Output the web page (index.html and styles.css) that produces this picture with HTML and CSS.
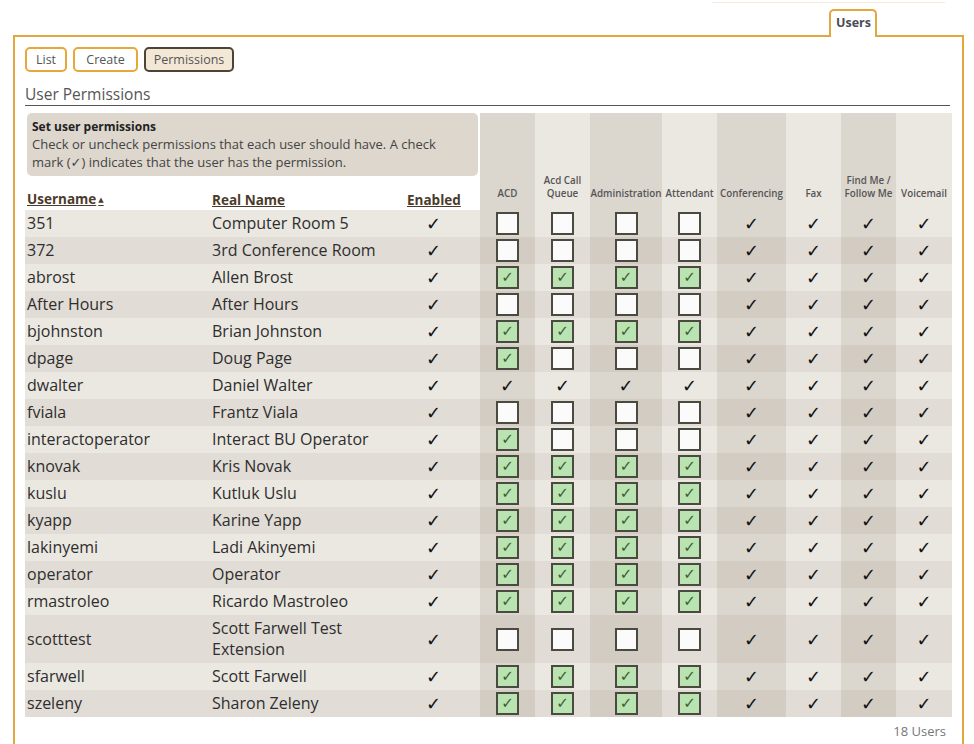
FILE: index.html
```html
<!DOCTYPE html>
<html>
<head>
<meta charset="utf-8">
<link rel="stylesheet" href="styles.css">
</head>
<body>
<div class="topline"></div>
<div class="tabbar"><div class="tab">Users</div></div>
<div class="panel">
  <div class="buttons">
    <span class="btn btn-list">List</span>
    <span class="btn btn-create">Create</span>
    <span class="btn btn-perm active">Permissions</span>
  </div>
  <h2 class="heading">User Permissions</h2>
  <table class="perms">
    <colgroup>
      <col class="c-user"><col class="c-real"><col class="c-en">
      <col class="bd w55"><col class="bl w55"><col class="bd w72"><col class="bl w55">
      <col class="bd w69"><col class="bl w55"><col class="bd w55"><col class="bl w56">
    </colgroup>
    <thead>
      <tr>
        <td colspan="3" class="infocell">
          <div class="info">
            <div class="info-title">Set user permissions</div>
            <div class="info-text">Check or uncheck permissions that each user should have. A check mark (✓) indicates that the user has the permission.</div>
          </div>
        </td>
        <th rowspan="2" class="ph">ACD</th>
        <th rowspan="2" class="ph">Acd Call<br>Queue</th>
        <th rowspan="2" class="ph">Administration</th>
        <th rowspan="2" class="ph">Attendant</th>
        <th rowspan="2" class="ph">Conferencing</th>
        <th rowspan="2" class="ph">Fax</th>
        <th rowspan="2" class="ph">Find Me /<br>Follow Me</th>
        <th rowspan="2" class="ph">Voicemail</th>
      </tr>
      <tr>
        <th class="lh"><span class="sort">Username<span class="arrow">▲</span></span></th>
        <th class="lh"><span class="sort">Real Name</span></th>
        <th class="lh"><span class="sort">Enabled</span></th>
      </tr>
    </thead>
    <tbody>
      <tr><td class="user">351</td><td class="real">Computer Room 5</td><td class="en">✓</td>
        <td class="p"><span class="cb"></span></td><td class="p"><span class="cb"></span></td><td class="p"><span class="cb"></span></td><td class="p"><span class="cb"></span></td>
        <td class="p ck">✓</td><td class="p ck">✓</td><td class="p ck">✓</td><td class="p ck">✓</td></tr>
      <tr><td class="user">372</td><td class="real">3rd Conference Room</td><td class="en">✓</td>
        <td class="p"><span class="cb"></span></td><td class="p"><span class="cb"></span></td><td class="p"><span class="cb"></span></td><td class="p"><span class="cb"></span></td>
        <td class="p ck">✓</td><td class="p ck">✓</td><td class="p ck">✓</td><td class="p ck">✓</td></tr>
      <tr><td class="user">abrost</td><td class="real">Allen Brost</td><td class="en">✓</td>
        <td class="p"><span class="cb on">✓</span></td><td class="p"><span class="cb on">✓</span></td><td class="p"><span class="cb on">✓</span></td><td class="p"><span class="cb on">✓</span></td>
        <td class="p ck">✓</td><td class="p ck">✓</td><td class="p ck">✓</td><td class="p ck">✓</td></tr>
      <tr><td class="user">After Hours</td><td class="real">After Hours</td><td class="en">✓</td>
        <td class="p"><span class="cb"></span></td><td class="p"><span class="cb"></span></td><td class="p"><span class="cb"></span></td><td class="p"><span class="cb"></span></td>
        <td class="p ck">✓</td><td class="p ck">✓</td><td class="p ck">✓</td><td class="p ck">✓</td></tr>
      <tr><td class="user">bjohnston</td><td class="real">Brian Johnston</td><td class="en">✓</td>
        <td class="p"><span class="cb on">✓</span></td><td class="p"><span class="cb on">✓</span></td><td class="p"><span class="cb on">✓</span></td><td class="p"><span class="cb on">✓</span></td>
        <td class="p ck">✓</td><td class="p ck">✓</td><td class="p ck">✓</td><td class="p ck">✓</td></tr>
      <tr><td class="user">dpage</td><td class="real">Doug Page</td><td class="en">✓</td>
        <td class="p"><span class="cb on">✓</span></td><td class="p"><span class="cb"></span></td><td class="p"><span class="cb"></span></td><td class="p"><span class="cb"></span></td>
        <td class="p ck">✓</td><td class="p ck">✓</td><td class="p ck">✓</td><td class="p ck">✓</td></tr>
      <tr><td class="user">dwalter</td><td class="real">Daniel Walter</td><td class="en">✓</td>
        <td class="p ck">✓</td><td class="p ck">✓</td><td class="p ck">✓</td><td class="p ck">✓</td>
        <td class="p ck">✓</td><td class="p ck">✓</td><td class="p ck">✓</td><td class="p ck">✓</td></tr>
      <tr><td class="user">fviala</td><td class="real">Frantz Viala</td><td class="en">✓</td>
        <td class="p"><span class="cb"></span></td><td class="p"><span class="cb"></span></td><td class="p"><span class="cb"></span></td><td class="p"><span class="cb"></span></td>
        <td class="p ck">✓</td><td class="p ck">✓</td><td class="p ck">✓</td><td class="p ck">✓</td></tr>
      <tr><td class="user">interactoperator</td><td class="real">Interact BU Operator</td><td class="en">✓</td>
        <td class="p"><span class="cb on">✓</span></td><td class="p"><span class="cb"></span></td><td class="p"><span class="cb"></span></td><td class="p"><span class="cb"></span></td>
        <td class="p ck">✓</td><td class="p ck">✓</td><td class="p ck">✓</td><td class="p ck">✓</td></tr>
      <tr><td class="user">knovak</td><td class="real">Kris Novak</td><td class="en">✓</td>
        <td class="p"><span class="cb on">✓</span></td><td class="p"><span class="cb on">✓</span></td><td class="p"><span class="cb on">✓</span></td><td class="p"><span class="cb on">✓</span></td>
        <td class="p ck">✓</td><td class="p ck">✓</td><td class="p ck">✓</td><td class="p ck">✓</td></tr>
      <tr><td class="user">kuslu</td><td class="real">Kutluk Uslu</td><td class="en">✓</td>
        <td class="p"><span class="cb on">✓</span></td><td class="p"><span class="cb on">✓</span></td><td class="p"><span class="cb on">✓</span></td><td class="p"><span class="cb on">✓</span></td>
        <td class="p ck">✓</td><td class="p ck">✓</td><td class="p ck">✓</td><td class="p ck">✓</td></tr>
      <tr><td class="user">kyapp</td><td class="real">Karine Yapp</td><td class="en">✓</td>
        <td class="p"><span class="cb on">✓</span></td><td class="p"><span class="cb on">✓</span></td><td class="p"><span class="cb on">✓</span></td><td class="p"><span class="cb on">✓</span></td>
        <td class="p ck">✓</td><td class="p ck">✓</td><td class="p ck">✓</td><td class="p ck">✓</td></tr>
      <tr><td class="user">lakinyemi</td><td class="real">Ladi Akinyemi</td><td class="en">✓</td>
        <td class="p"><span class="cb on">✓</span></td><td class="p"><span class="cb on">✓</span></td><td class="p"><span class="cb on">✓</span></td><td class="p"><span class="cb on">✓</span></td>
        <td class="p ck">✓</td><td class="p ck">✓</td><td class="p ck">✓</td><td class="p ck">✓</td></tr>
      <tr><td class="user">operator</td><td class="real">Operator</td><td class="en">✓</td>
        <td class="p"><span class="cb on">✓</span></td><td class="p"><span class="cb on">✓</span></td><td class="p"><span class="cb on">✓</span></td><td class="p"><span class="cb on">✓</span></td>
        <td class="p ck">✓</td><td class="p ck">✓</td><td class="p ck">✓</td><td class="p ck">✓</td></tr>
      <tr><td class="user">rmastroleo</td><td class="real">Ricardo Mastroleo</td><td class="en">✓</td>
        <td class="p"><span class="cb on">✓</span></td><td class="p"><span class="cb on">✓</span></td><td class="p"><span class="cb on">✓</span></td><td class="p"><span class="cb on">✓</span></td>
        <td class="p ck">✓</td><td class="p ck">✓</td><td class="p ck">✓</td><td class="p ck">✓</td></tr>
      <tr><td class="user">scotttest</td><td class="real">Scott Farwell Test Extension</td><td class="en">✓</td>
        <td class="p"><span class="cb"></span></td><td class="p"><span class="cb"></span></td><td class="p"><span class="cb"></span></td><td class="p"><span class="cb"></span></td>
        <td class="p ck">✓</td><td class="p ck">✓</td><td class="p ck">✓</td><td class="p ck">✓</td></tr>
      <tr><td class="user">sfarwell</td><td class="real">Scott Farwell</td><td class="en">✓</td>
        <td class="p"><span class="cb on">✓</span></td><td class="p"><span class="cb on">✓</span></td><td class="p"><span class="cb on">✓</span></td><td class="p"><span class="cb on">✓</span></td>
        <td class="p ck">✓</td><td class="p ck">✓</td><td class="p ck">✓</td><td class="p ck">✓</td></tr>
      <tr><td class="user">szeleny</td><td class="real">Sharon Zeleny</td><td class="en">✓</td>
        <td class="p"><span class="cb on">✓</span></td><td class="p"><span class="cb on">✓</span></td><td class="p"><span class="cb on">✓</span></td><td class="p"><span class="cb on">✓</span></td>
        <td class="p ck">✓</td><td class="p ck">✓</td><td class="p ck">✓</td><td class="p ck">✓</td></tr>
    </tbody>
  </table>
  <div class="count">18 Users</div>
</div>
</body>
</html>
```
FILE: styles.css
```css
html, body {
  margin: 0;
  padding: 0;
  background: #ffffff;
  font-family: "Open Sans", "DejaVu Sans", sans-serif;
  color: #333;
}

.topline {
  margin-left: 712px;
  width: 233px;
  height: 2px;
  border-bottom: 1px solid #f4ecd9;
}

.tabbar {
  display: flex;
  justify-content: flex-end;
  padding-right: 97px;
  margin-top: 6px;
}

.tab {
  position: relative;
  z-index: 1;
  background: #fff;
  border: 2px solid #e2a73e;
  border-bottom: none;
  border-radius: 5px 5px 0 0;
  padding: 0 4px 2px 5px;
  height: 24px;
  line-height: 24px;
  font-size: 12.5px;
  font-weight: bold;
  color: #4a4a55;
  margin-bottom: -2px;
}

.panel {
  margin-left: 13px;
  width: 937px;
  border: 2px solid #e2a73e;
  border-bottom: none;
  padding: 10px 0 20px 10px;
}

.buttons {
  display: flex;
  gap: 6px;
}

.btn {
  display: inline-block;
  box-sizing: border-box;
  height: 25px;
  line-height: 21px;
  text-align: center;
  border: 2px solid #e6a83a;
  border-radius: 5px;
  background: #fff;
  font-size: 12.5px;
  color: #555;
}

.btn-list { width: 42px; }
.btn-create { width: 65px; }
.btn-perm { width: 90px; }

.btn.active {
  border-color: #4d4437;
  background: #f3e7d6;
}

.heading {
  margin: 12px 0 0;
  width: 925px;
  font-size: 15.5px;
  font-weight: normal;
  line-height: 20px;
  color: #555;
  padding-bottom: 1px;
  border-bottom: 1px solid #555;
}

.perms {
  margin-top: 7px;
  width: 927px;
  table-layout: fixed;
  border-collapse: collapse;
  border-spacing: 0;
}

.c-user { width: 185px; }
.c-real { width: 195px; }
.c-en { width: 75px; }
.w55 { width: 55px; }
.w56 { width: 56px; }
.w69 { width: 69px; }
.w72 { width: 72px; }
.bd { background: #dbd6ce; }
.bl { background: #ebe7e1; }

.infocell {
  padding: 0 2px;
  vertical-align: top;
}

.info {
  background: #ddd7cd;
  border-radius: 5px;
  padding: 6px 8px 5px 5px;
}

.info-title {
  font-size: 12px;
  font-weight: bold;
  line-height: 16px;
  color: #222;
}

.info-text {
  font-size: 13px;
  line-height: 18px;
  color: #444;
}

.ph {
  vertical-align: bottom;
  text-align: center;
  font-size: 9.8px;
  font-weight: 600;
  line-height: 13px;
  color: #555;
  padding: 0 0 10px;
  white-space: nowrap;
}

.lh {
  text-align: left;
  vertical-align: bottom;
  padding: 15px 2px 2px;
  line-height: 16px;
  font-size: 13.5px;
  font-weight: bold;
  color: #4b3b2b;
}

.sort {
  text-decoration: underline;
}

.arrow {
  font-size: 7px;
  margin-left: 2px;
  vertical-align: 2px;
}

.perms tbody td {
  padding: 3px 2px;
  line-height: 21px;
  font-size: 16px;
  color: #2e2e2e;
  vertical-align: middle;
}

.perms tbody td.user,
.perms tbody td.real,
.perms tbody td.en {
  background: #ebe7e1;
}

.perms tbody tr:nth-child(even) td.user,
.perms tbody tr:nth-child(even) td.real,
.perms tbody tr:nth-child(even) td.en {
  background: #e1dcd5;
}

.perms tbody tr:nth-child(even) td.p {
  background: rgba(60, 40, 20, 0.055);
}

.perms tbody td.en {
  text-align: center;
  padding-right: 20px;
  font-family: "DejaVu Sans", sans-serif;
  font-size: 18px;
  font-weight: bold;
  color: #111;
}

.perms tbody td.p {
  padding: 2px 0;
  text-align: center;
}

.perms tbody td.ck {
  font-family: "DejaVu Sans", sans-serif;
  font-size: 18px;
  font-weight: bold;
  color: #111;
}

.cb {
  display: block;
  margin: 0 auto;
  width: 19px;
  height: 19px;
  border: 2px solid #4b4a41;
  background: #fbfbfb;
  font-family: "DejaVu Sans", sans-serif;
  font-size: 15px;
  line-height: 19px;
  color: #3d5a34;
  text-align: center;
}

.cb.on {
  background: #b9e3b0;
}

.count {
  width: 921px;
  text-align: right;
  margin-top: 6px;
  font-size: 13px;
  line-height: 16px;
  color: #777;
}
```
